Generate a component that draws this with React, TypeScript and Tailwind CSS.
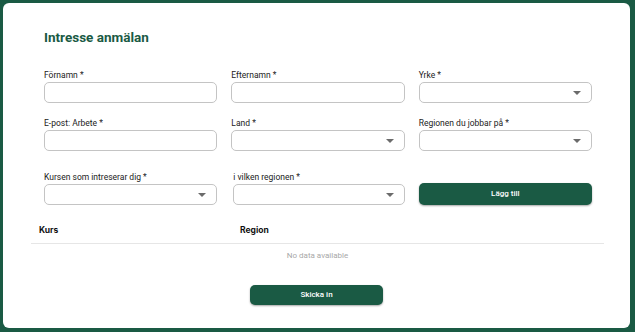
const Caret = () => (
  <svg width="8" height="5" viewBox="0 0 8 5" className="absolute right-[10px] top-1/2 -translate-y-1/2">
    <path d="M0 0.5 L8 0.5 L4 4.5 Z" fill="#6b6b6b" />
  </svg>
);

const Field = ({ label, select }: { label: string; select?: boolean }) => (
  <div className="flex flex-col">
    <label className="text-[8.5px] leading-[12px] mb-px text-[#222]">{label}</label>
    <div className="relative h-[21px] rounded-[5px] border border-[#c4c4c4] bg-white">
      {select && <Caret />}
    </div>
  </div>
);

const App = () => {
  return (
    <div
      className="h-[332px] w-[635px] bg-[#1a5a44] pt-[3px] pl-[3px] pr-[5px] pb-[4px]"
      style={{ fontFamily: "Roboto, 'Liberation Sans', sans-serif" }}
    >
      <div className="h-full bg-white rounded-[6px] pt-[24px]">
        <div className="pl-[41px] pr-[38px]">
          <h1 className="text-[13.5px] leading-[20px] font-bold text-[#1a5a44]">Intresse anmälan</h1>

          <div className="mt-[22px] grid grid-cols-3 gap-x-[14px]">
            <Field label="Förnamn *" />
            <Field label="Efternamn *" />
            <Field label="Yrke *" select />
          </div>

          <div className="mt-[14px] grid grid-cols-3 gap-x-[14px]">
            <Field label="E-post: Arbete *" />
            <Field label="Land *" select />
            <Field label="Regionen du jobbar på *" select />
          </div>

          <div className="mt-[20px] grid grid-cols-3 gap-x-[14px] items-end">
            <Field label="Kursen som intreserar dig *" select />
            <div className="ml-[2px]">
              <Field label="i vilken regionen *" select />
            </div>
            <button className="h-[22px] rounded-[5px] bg-[#1a5a44] text-white text-[8px] font-medium shadow-[0_1px_2px_rgba(0,0,0,0.35)]">
              Lägg till
            </button>
          </div>
        </div>

        <div className="ml-[28px] mr-[26px] mt-[13px]">
          <div
            className="grid grid-cols-[201px_1fr] h-[26px] items-center border-b border-[#e6e6e6] text-[8.5px] font-bold text-[#111]"
            style={{ fontFamily: "Inter, 'Liberation Sans', sans-serif" }}
          >
            <div className="pl-[8px]">Kurs</div>
            <div className="pl-[8px]">Region</div>
          </div>
          <div className="h-[24px] flex items-center justify-center text-[8px] text-[#a8a8a8]">
            No data available
          </div>
        </div>

        <div className="mt-[17px] flex justify-center">
          <button className="w-[133px] h-[20px] rounded-[5px] bg-[#1a5a44] text-white text-[8px] font-medium shadow-[0_1px_2px_rgba(0,0,0,0.35)]">
            Skicka in
          </button>
        </div>
      </div>
    </div>
  );
};

export default App;
